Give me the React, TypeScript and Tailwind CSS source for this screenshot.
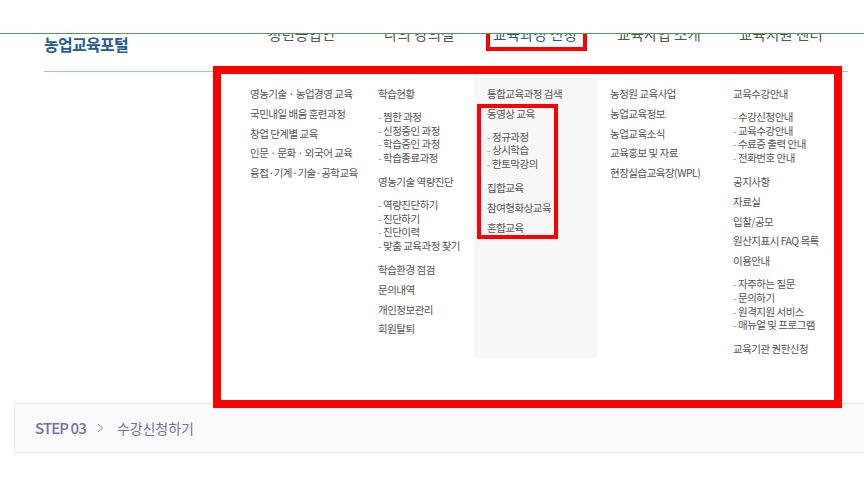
const font = { fontFamily: '"Noto Sans CJK KR", "Noto Sans", sans-serif' };

type Entry = string | string[];

const columns: { width: string; entries: Entry[] }[] = [
  {
    width: "w-[144px] pl-[29px]",
    entries: ["영농기술 · 농업경영 교육", "국민내일 배움 훈련과정", "창업 단계별 교육", "인문 · 문화 · 외국어 교육", "융접·기계·기술·공학교육"],
  },
  {
    width: "w-[109px] pl-[13px]",
    entries: [
      "학습현황",
      ["찜한 과정", "신청중인 과정", "학습중인 과정", "학습종료과정"],
      "영농기술 역량진단",
      ["역량진단하기", "진단하기", "진단이력", "맞춤 교육과정 찾기"],
      "학습환경 점검",
      "문의내역",
      "개인정보관리",
      "회원탈퇴",
    ],
  },
];

const lastColumns: { width: string; entries: Entry[] }[] = [
  {
    width: "w-[123px] pl-[13px]",
    entries: ["농정원 교육사업", "농업교육정보", "농업교육소식", "교육홍보 및 자료", "현장실습교육장(WPL)"],
  },
  {
    width: "w-[114px] pl-[13px]",
    entries: [
      "교육수강안내",
      ["수강신청안내", "교육수강안내", "수료증 출력 안내", "전화번호 안내"],
      "공지사항",
      "자료실",
      "입찰/공모",
      "원산지표시 FAQ 목록",
      "이용안내",
      ["자주하는 질문", "문의하기", "원격지원 서비스", "매뉴얼 및 프로그램"],
      "교육기관 권한신청",
    ],
  },
];

function Item({ label }: { label: string }) {
  return <div className="h-[19.8px] leading-[19.8px] whitespace-nowrap">{label}</div>;
}

function SubList({ items }: { items: string[] }) {
  return (
    <ul className="pt-[6px] pb-[7px]">
      {items.map((item) => (
        <li key={item} className="h-[13.8px] leading-[13.8px] whitespace-nowrap">
          <span className="text-[#999]">- </span>
          {item}
        </li>
      ))}
    </ul>
  );
}

function Entries({ entries }: { entries: Entry[] }) {
  return (
    <>
      {entries.map((entry, i) =>
        typeof entry === "string" ? <Item key={i} label={entry} /> : <SubList key={i} items={entry} />
      )}
    </>
  );
}

function Menu() {
  return (
    <div className="absolute left-[213px] top-[66px] z-10 flex h-[342px] w-[629px] border-8 border-[#ff0000] bg-white text-[10.5px] tracking-[-0.5px] text-[#555]">
      {columns.map((col, i) => (
        <div key={i} className={`${col.width} pt-[10px]`}>
          <Entries entries={col.entries} />
        </div>
      ))}
      <div className="h-[284px] w-[123px] bg-[#f7f7f7] pt-[10px] pl-[3px]">
        <div className="pl-[10px]">
          <Item label="통합교육과정 검색" />
        </div>
        <div className="h-[135px] w-[81px] border-4 border-[#ff0000] pl-[6px]">
          <div className="-mt-[4px]">
            <Item label="동영상 교육" />
            <SubList items={["정규과정", "상시학습", "한토막강의"]} />
            <Item label="집합교육" />
            <Item label="참여형화상교육" />
            <Item label="혼합교육" />
          </div>
        </div>
      </div>
      {lastColumns.map((col, i) => (
        <div key={i} className={`${col.width} pt-[10px]`}>
          <Entries entries={col.entries} />
        </div>
      ))}
    </div>
  );
}

function Header() {
  return (
    <div className="h-[38px] overflow-hidden">
      <div className="ml-[44px] mr-[16px] flex h-[38px] items-start border-b border-[#9dd094]">
        <div className="w-[224px] text-[16px] leading-[21px] font-bold tracking-[-0.7px] text-[#1f5c99]">
          농업교육포털
        </div>
        <nav className="-mt-[14px] flex text-[14.5px] leading-[28px] tracking-[0.1px] text-[#555]">
          <span className="w-[116px]">청년농업인</span>
          <span className="w-[109px]">나의 강의실</span>
          <span className="relative w-[124px] text-[#1f5c99]">
            교육과정 신청
            <span className="absolute -left-[7px] top-[4px] h-[27px] w-[101px] border-4 border-[#ff0000]" />
          </span>
          <span className="w-[122px]">교육사업 소개</span>
          <span>교육지원 센터</span>
        </nav>
      </div>
    </div>
  );
}

export default function App() {
  return (
    <div className="relative h-[477px] w-[864px] overflow-hidden bg-white" style={font}>
      <div className="h-[34px] border-b border-[#4c9f4c]" />
      <Header />
      <Menu />
      <div className="mt-[331px] ml-[14px] flex h-[50px] w-[860px] items-center border border-[#e6e8ec] bg-[#f9fafc] pl-[20px] text-[#7a6bb5]">
        <span className="text-[15px] font-medium tracking-[-0.9px]">STEP 03</span>
        <svg className="ml-[11px] mr-[13px]" width="7" height="10" viewBox="0 0 7 10" fill="none">
          <path d="M1 1l4.5 4L1 9" stroke="#8d80bf" strokeWidth="1" />
        </svg>
        <span className="text-[14px] tracking-[-0.05px]">수강신청하기</span>
      </div>
    </div>
  );
}
